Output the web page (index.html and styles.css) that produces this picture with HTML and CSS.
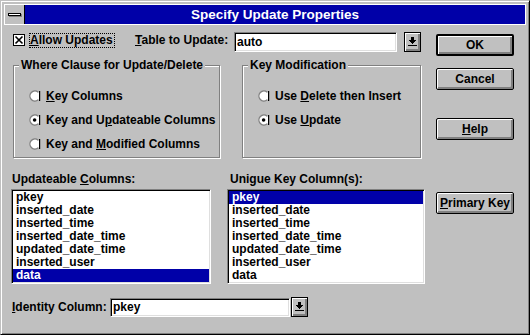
FILE: index.html
```html
<!DOCTYPE html>
<html>
<head>
<meta charset="utf-8">
<title>Specify Update Properties</title>
<link rel="stylesheet" href="styles.css">
</head>
<body>
<div class="window">
  <div class="titlebar">
    <div class="sysmenu"><span class="sysbar"></span></div>
    <div class="caption">Specify Update Properties</div>
  </div>
  <div class="client">
    <div class="main">
      <div class="row-top">
        <span class="check">
          <svg width="12" height="12" viewBox="0 0 12 12">
            <rect x="0.5" y="0.5" width="11" height="11" fill="#fff" stroke="#000"/>
            <path d="M2.5 2.5 L9.5 9.5 M9.5 2.5 L2.5 9.5" stroke="#000" stroke-width="1.6"/>
          </svg>
        </span>
        <span class="focus"><span class="ak">A</span>llow Updates</span>
        <span class="table-lbl"><span class="ak">T</span>able to Update:</span>
        <div class="field table-field">auto</div>
        <div class="drop">
          <svg width="9" height="9" viewBox="0 0 9 9" shape-rendering="crispEdges">
            <rect x="3" y="0" width="3" height="3" fill="#000"/>
            <rect x="1" y="3" width="7" height="1" fill="#000"/>
            <rect x="2" y="4" width="5" height="1" fill="#000"/>
            <rect x="3" y="5" width="3" height="1" fill="#000"/>
            <rect x="4" y="6" width="1" height="1" fill="#000"/>
            <rect x="0" y="8" width="9" height="1" fill="#000"/>
          </svg>
        </div>
      </div>

      <div class="groups">
        <div class="group g1">
          <div class="group-title">Where Clause for Update/Delete</div>
          <div class="radio-list">
            <div class="radio">
              <svg width="12" height="12" viewBox="0 0 12 12">
                <circle cx="6" cy="6" r="5" fill="#fff"/>
                <path d="M9.2 2.2 A5 5 0 1 0 9.2 9.8" fill="none" stroke="#808080" stroke-width="1.3"/>
                <rect x="10" y="1" width="1.2" height="10" fill="#000"/>
              </svg>
              <span><span class="ak">K</span>ey Columns</span>
            </div>
            <div class="radio">
              <svg width="12" height="12" viewBox="0 0 12 12">
                <circle cx="6" cy="6" r="5" fill="#fff"/>
                <path d="M9.2 2.2 A5 5 0 1 0 9.2 9.8" fill="none" stroke="#808080" stroke-width="1.3"/>
                <rect x="10" y="1" width="1.2" height="10" fill="#000"/>
                <circle cx="5.6" cy="6" r="1.8" fill="#000"/>
              </svg>
              <span>Key and U<span class="ak">p</span>dateable Columns</span>
            </div>
            <div class="radio">
              <svg width="12" height="12" viewBox="0 0 12 12">
                <circle cx="6" cy="6" r="5" fill="#fff"/>
                <path d="M9.2 2.2 A5 5 0 1 0 9.2 9.8" fill="none" stroke="#808080" stroke-width="1.3"/>
                <rect x="10" y="1" width="1.2" height="10" fill="#000"/>
              </svg>
              <span>Key and <span class="ak">M</span>odified Columns</span>
            </div>
          </div>
        </div>
        <div class="group g2">
          <div class="group-title">Key Modification</div>
          <div class="radio-list">
            <div class="radio">
              <svg width="12" height="12" viewBox="0 0 12 12">
                <circle cx="6" cy="6" r="5" fill="#fff"/>
                <path d="M9.2 2.2 A5 5 0 1 0 9.2 9.8" fill="none" stroke="#808080" stroke-width="1.3"/>
                <rect x="10" y="1" width="1.2" height="10" fill="#000"/>
              </svg>
              <span>Use <span class="ak">D</span>elete then Insert</span>
            </div>
            <div class="radio">
              <svg width="12" height="12" viewBox="0 0 12 12">
                <circle cx="6" cy="6" r="5" fill="#fff"/>
                <path d="M9.2 2.2 A5 5 0 1 0 9.2 9.8" fill="none" stroke="#808080" stroke-width="1.3"/>
                <rect x="10" y="1" width="1.2" height="10" fill="#000"/>
                <circle cx="5.6" cy="6" r="1.8" fill="#000"/>
              </svg>
              <span>Use <span class="ak">U</span>pdate</span>
            </div>
          </div>
        </div>
      </div>

      <div class="lists">
        <div class="list-col c1">
          <div class="list-label">Updateable <span class="ak">C</span>olumns:</div>
          <div class="listbox">
            <div class="item">pkey</div>
            <div class="item">inserted_date</div>
            <div class="item">inserted_time</div>
            <div class="item">inserted_date_time</div>
            <div class="item">updated_date_time</div>
            <div class="item">inserted_user</div>
            <div class="item sel">data</div>
          </div>
        </div>
        <div class="list-col c2">
          <div class="list-label">Unigue Key Column(s):</div>
          <div class="listbox">
            <div class="item sel">pkey</div>
            <div class="item">inserted_date</div>
            <div class="item">inserted_time</div>
            <div class="item">inserted_date_time</div>
            <div class="item">updated_date_time</div>
            <div class="item">inserted_user</div>
            <div class="item">data</div>
          </div>
        </div>
      </div>

      <div class="identity">
        <span class="id-label"><span class="ak">I</span>dentity Column:</span>
        <div class="field id-field">pkey</div>
        <div class="drop id-drop">
          <svg width="9" height="9" viewBox="0 0 9 9" shape-rendering="crispEdges">
            <rect x="3" y="0" width="3" height="3" fill="#000"/>
            <rect x="1" y="3" width="7" height="1" fill="#000"/>
            <rect x="2" y="4" width="5" height="1" fill="#000"/>
            <rect x="3" y="5" width="3" height="1" fill="#000"/>
            <rect x="4" y="6" width="1" height="1" fill="#000"/>
            <rect x="0" y="8" width="9" height="1" fill="#000"/>
          </svg>
        </div>
      </div>
    </div>

    <div class="side">
      <div class="btn btn-default">OK</div>
      <div class="btn btn-cancel">Cancel</div>
      <div class="btn btn-help"><span class="ak">H</span>elp</div>
      <div class="btn btn-pk"><span class="ak">P</span>rimary Key</div>
    </div>
  </div>
</div>
</body>
</html>
```

FILE: styles.css
```css
* {
  box-sizing: border-box;
}

body {
  margin: 0;
  font-family: "Liberation Sans", Arial, sans-serif;
  font-weight: bold;
  font-size: 12px;
  color: #000;
}

.ak {
  text-decoration: underline;
}

.window {
  width: 530px;
  height: 335px;
  background: #c0c0c0;
  border: 1px solid;
  border-color: #c0c0c0 #000 #000 #c0c0c0;
  box-shadow: inset 1px 1px #fff, inset -1px -1px #808080;
  padding: 3px;
  display: flex;
  flex-direction: column;
}

.titlebar {
  flex: none;
  display: flex;
  height: 21px;
  border: 1px solid #fff;
}

.sysmenu {
  width: 20px;
  border-right: 1px solid #000;
  background: #c0c0c0;
  display: flex;
  align-items: center;
  justify-content: center;
}

.sysbar {
  width: 13px;
  height: 3px;
  background: #fff;
  border: 1px solid #000;
  box-shadow: 1px 1px #808080;
}

.caption {
  flex: 1;
  background: #0000a8;
  color: #fff;
  font-size: 13.5px;
  display: flex;
  align-items: center;
  justify-content: center;
}

.client {
  flex: 1;
  display: flex;
  padding: 7px 0 0 7px;
}

.main {
  width: 425px;
  display: flex;
  flex-direction: column;
}

.side {
  width: 78px;
  padding-top: 2px;
  display: flex;
  flex-direction: column;
}

/* top row */
.row-top {
  display: flex;
  align-items: flex-start;
  height: 20px;
}

.check {
  display: flex;
  width: 12px;
  height: 12px;
  margin: 2px 0 0 2px;
}

.focus {
  width: 86px;
  margin: 1px 0 0 4px;
  border: 1px dotted #000;
  line-height: 13px;
  white-space: nowrap;
}

.table-lbl {
  width: 99px;
  margin: 1px 0 0 20px;
  line-height: 15px;
  white-space: nowrap;
}

.field {
  background: #fff;
  border: 1px solid;
  border-color: #808080 #fff #fff #808080;
  box-shadow: inset 1px 1px #000, inset -1px -1px #dfdfdf;
  padding: 0 2px;
  white-space: nowrap;
}

.table-field {
  width: 163px;
  height: 20px;
  line-height: 18px;
}

.drop {
  width: 17px;
  height: 20px;
  margin-left: 7px;
  border: 1px solid #000;
  background: #c0c0c0;
  box-shadow: inset 1px 1px #fff, inset -2px -2px #808080;
  display: flex;
  align-items: center;
  justify-content: center;
  padding-bottom: 1px;
}

/* group boxes */
.groups {
  display: flex;
  margin-top: 13px;
}

.group {
  height: 93px;
  border: 1px solid #808080;
  box-shadow: inset 1px 1px #fff, 1px 1px #fff;
  padding-left: 15px;
}

.g1 {
  width: 207px;
  margin-left: 2px;
}

.g2 {
  width: 179px;
  margin-left: 22px;
}

.group-title {
  width: fit-content;
  margin: -8px 0 0 -10px;
  padding: 0 2px;
  background: #c0c0c0;
  line-height: 15px;
  white-space: nowrap;
}

.radio-list {
  margin-top: 11px;
  display: flex;
  flex-direction: column;
}

.radio {
  display: flex;
  align-items: center;
  gap: 5px;
  height: 24px;
  line-height: 15px;
  white-space: nowrap;
}

.radio svg {
  flex: none;
}

/* list boxes */
.lists {
  display: flex;
  margin-top: 14px;
}

.c1 {
  width: 200px;
}

.c2 {
  width: 198px;
  margin-left: 16px;
}

.list-label {
  line-height: 15px;
  margin-bottom: 2px;
  white-space: nowrap;
}

.c1 .list-label {
  padding-left: 1px;
}

.c2 .list-label {
  padding-left: 3px;
}

.listbox {
  height: 95px;
  background: #fff;
  border: 1px solid;
  border-color: #808080 #fff #fff #808080;
  box-shadow: inset 1px 1px #000, inset -1px -1px #dfdfdf;
  padding: 1px;
}

.item {
  height: 13px;
  line-height: 13px;
  padding-left: 3px;
  white-space: nowrap;
}

.item.sel {
  background: #0000a8;
  color: #fff;
}

/* identity row */
.identity {
  display: flex;
  align-items: center;
  height: 20px;
  margin-top: 13px;
}

.id-label {
  width: 99px;
  padding-left: 1px;
  white-space: nowrap;
}

.id-field {
  width: 180px;
  height: 19px;
  line-height: 17px;
}

.id-drop {
  margin-left: 1px;
}

/* push buttons */
.btn {
  width: 78px;
  height: 22px;
  border: 1px solid #000;
  border-radius: 2px;
  background: #c0c0c0;
  box-shadow: inset 1px 1px #fff, inset -2px -2px #808080;
  display: flex;
  align-items: center;
  justify-content: center;
  white-space: nowrap;
  padding-bottom: 1px;
}

.btn-default {
  border-width: 2px;
}

.btn-cancel {
  margin-top: 12px;
}

.btn-help {
  margin-top: 28px;
}

.btn-pk {
  margin-top: 52px;
}
```
